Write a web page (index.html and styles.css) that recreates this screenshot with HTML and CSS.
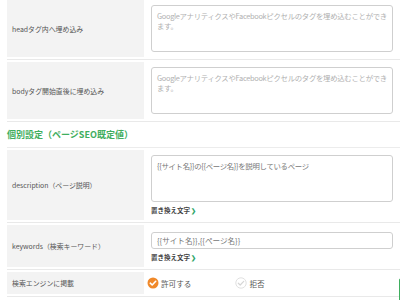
FILE: index.html
```html
<!DOCTYPE html>
<html lang="ja">
<head>
<meta charset="UTF-8">
<title>SEO設定</title>
<link rel="stylesheet" href="styles.css">
</head>
<body>

<div class="settings">
    <div class="row">
        <div class="label">headタグ内へ埋め込み</div>
        <div class="field">
            <textarea class="area" placeholder="GoogleアナリティクスやFacebookピクセルのタグを埋め込むことができます。"></textarea>
        </div>
    </div>

    <div class="row">
        <div class="label">bodyタグ開始直後に埋め込み</div>
        <div class="field">
            <textarea class="area" placeholder="GoogleアナリティクスやFacebookピクセルのタグを埋め込むことができます。"></textarea>
        </div>
    </div>

    <div class="section-title">個別設定（ページSEO既定値）</div>

    <div class="row">
        <div class="label">description（ページ説明）</div>
        <div class="field">
            <textarea class="area">{{サイト名}}の{{ページ名}}を説明しているページ</textarea>
            <a class="replace-link">置き換え文字 <span class="chev">&#x276F;</span></a>
        </div>
    </div>

    <div class="row">
        <div class="label">keywords（検索キーワード）</div>
        <div class="field">
            <input type="text" class="line-input" value="{{サイト名}},{{ページ名}}">
            <a class="replace-link">置き換え文字 <span class="chev">&#x276F;</span></a>
        </div>
    </div>

    <div class="row">
        <div class="label">検索エンジンに掲載</div>
        <div class="field radios">
            <label class="radio checked">
                <span class="mark">
                    <svg viewBox="0 0 12 12" width="12" height="12"><circle cx="6" cy="6" r="5.5" fill="#f0892a"/><path d="M3.3 6.2 L5.2 8 L8.7 4.3" fill="none" stroke="#fff" stroke-width="1.6" stroke-linecap="round" stroke-linejoin="round"/></svg>
                </span>
                許可する
            </label>
            <label class="radio">
                <span class="mark">
                    <svg viewBox="0 0 12 12" width="12" height="12"><circle cx="6" cy="6" r="5.2" fill="#fff" stroke="#dcdcdc" stroke-width="0.9"/><path d="M3.3 6.2 L5.2 8 L8.7 4.3" fill="none" stroke="#d6d6d6" stroke-width="1.2" stroke-linecap="round" stroke-linejoin="round"/></svg>
                </span>
                拒否
            </label>
        </div>
    </div>
</div>

<div class="edge-tab"></div>

</body>
</html>
```

FILE: styles.css
```css
body {
    margin: 0;
    background-color: #ffffff;
    font-family: 'Noto Sans CJK JP', 'Noto Sans', sans-serif;
    color: #555555;
    overflow: hidden;
    height: 300px;
    position: relative;
}

.settings {
    margin-left: 7px;
    width: 400px;
}

.row {
    display: flex;
    padding: 2px 0;
    border-bottom: 1px solid #e9e9e9;
}

.row:first-child {
    padding-top: 0;
}

.label {
    width: 132px;
    flex-shrink: 0;
    background-color: #f3f3f3;
    display: flex;
    align-items: center;
    padding-left: 5px;
    font-size: 6.9px;
    color: #555555;
}

.field {
    flex: 1;
    padding: 5px 8px 5px 7px;
    display: flex;
    flex-direction: column;
}

.area {
    height: 47px;
    box-sizing: border-box;
    width: 242px;
    border: 1px solid #cfcfcf;
    border-radius: 3px;
    padding: 5px 5px;
    font-family: 'Noto Sans CJK JP', 'Noto Sans', sans-serif;
    font-size: 7.4px;
    letter-spacing: -0.3px;
    line-height: 1.4;
    color: #777777;
    resize: none;
    margin: 0;
}

.area::placeholder {
    color: #b0b0b0;
}

.line-input {
    height: 17px;
    box-sizing: border-box;
    width: 242px;
    border: 1px solid #cfcfcf;
    border-radius: 3px;
    padding: 0 5px;
    font-family: 'Noto Sans CJK JP', 'Noto Sans', sans-serif;
    font-size: 7.6px;
    color: #777777;
    margin: 2px 0 0;
}

.replace-link {
    font-size: 6.5px;
    font-weight: bold;
    color: #444444;
    margin-top: 4px;
    line-height: 9px;
}

.chev {
    color: #2fa66a;
    font-size: 6px;
}

.section-title {
    height: 25px;
    display: flex;
    align-items: center;
    font-size: 9px;
    font-weight: bold;
    color: #3fae5e;
    border-bottom: 1px solid #ececec;
}

.radios {
    flex-direction: row;
    align-items: center;
    gap: 44px;
    padding-left: 3px;
}

.radio {
    display: flex;
    align-items: center;
    gap: 2px;
    font-size: 7.6px;
    color: #555555;
}

.mark {
    display: flex;
}

.edge-tab {
    position: absolute;
    right: -10px;
    top: 278px;
    width: 9px;
    height: 30px;
    border: 1px solid #3fae5e;
    border-radius: 2px;
}
```
